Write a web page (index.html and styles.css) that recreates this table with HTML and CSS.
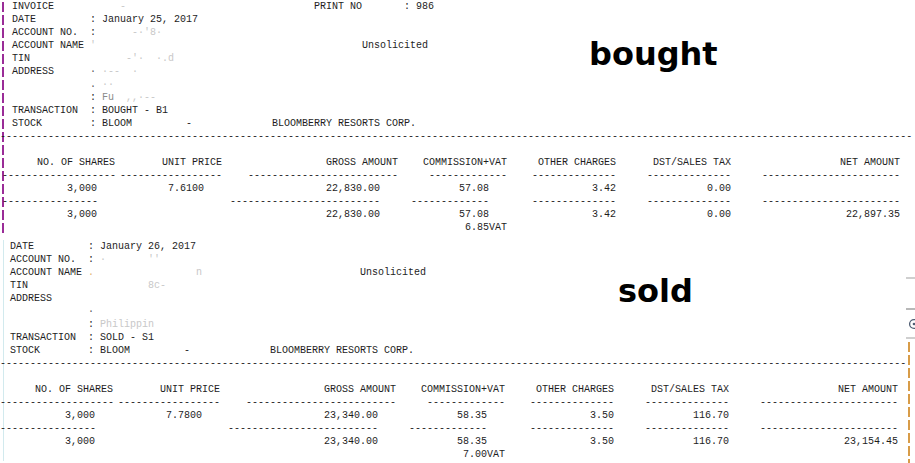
FILE: index.html
```html
<!DOCTYPE html>
<html lang="en">
<head>
<meta charset="utf-8">
<title>Trade confirmations</title>
<link rel="stylesheet" href="styles.css">
</head>
<body>
<main class="page">
  <section class="sheet sheet--buy">
    <div class="meta">
<div class="ln">  INVOICE           <span class="f">-</span>                               <span class="sh">PRINT NO       : 986</span></div>
<div class="ln">  DATE         : January 25, 2017</div>
<div class="ln">  ACCOUNT NO.  :      <span class="f">-·'8·</span></div>
<div class="ln">  ACCOUNT NAME <span class="f">'</span>                                            <span class="sh">Unsolicited</span></div>
<div class="ln">  TIN                <span class="f">-'·  ·.d</span></div>
<div class="ln">  ADDRESS      <span class="d">·</span> <span class="f">·--  ·</span></div>
<div class="ln">               <span class="d">.</span> <span class="f">··</span></div>
<div class="ln">               : <span class="g">Fu</span>  <span class="f">,,·--</span></div>
<div class="ln">  TRANSACTION  : BOUGHT - B1</div>
<div class="ln">  STOCK        : BLOOM         -             <span class="sh">BLOOMBERRY RESORTS CORP.</span></div>
    </div>
<div class="rule">--------------------------------------------------------------------------------------------------------------------------------------------------------</div>
    <div class="table">
      <div class="row"></div>
      <div class="row"><span>NO. OF SHARES</span><span>UNIT PRICE</span><span>GROSS AMOUNT</span><span>COMMISSION+VAT</span><span>OTHER CHARGES</span><span>DST/SALES TAX</span><span>NET AMOUNT</span></div>
      <div class="row"><span>-------------------</span><span>-----------------</span><span>-------------------------</span><span>-------------</span><span>--------------</span><span>--------------</span><span>-----------------------</span></div>
      <div class="row"><span class="p">3,000</span><span class="p">7.6100</span><span class="p">22,830.00</span><span class="p">57.08</span><span>3.42</span><span>0.00</span><span></span></div>
      <div class="row"><span class="p">----------------</span><span></span><span class="p">-------------------------</span><span class="p">-------------</span><span>--------------</span><span>--------------</span><span>-----------------------</span></div>
      <div class="row"><span class="p">3,000</span><span></span><span class="p">22,830.00</span><span class="p">57.08</span><span>3.42</span><span>0.00</span><span>22,897.35</span></div>
      <div class="row"><span></span><span></span><span></span><span>6.85VAT</span><span></span><span></span><span></span></div>
    </div>
  </section>

  <section class="sheet sheet--sell">
    <div class="meta">
<div class="ln"> DATE         : January 26, 2017</div>
<div class="ln"> ACCOUNT NO.  : <span class="f">·</span>       <span class="f">''</span></div>
<div class="ln"> ACCOUNT NAME <span class="o">.</span>                 <span class="f">n</span>                          <span class="sh">Unsolicited</span></div>
<div class="ln"> TIN                    <span class="f">8c-</span></div>
<div class="ln"> ADDRESS</div>
<div class="ln">              <span class="d">·</span></div>
<div class="ln">              : <span class="f">Philippin</span></div>
<div class="ln"> TRANSACTION  : SOLD - S1</div>
<div class="ln"> STOCK        : BLOOM         -             <span class="sh">BLOOMBERRY RESORTS CORP.</span></div>
    </div>
<div class="rule rule--short">-------------------------------------------------------------------------------------------------------------------------------------------------------</div>
    <div class="table">
      <div class="row"></div>
      <div class="row"><span>NO. OF SHARES</span><span>UNIT PRICE</span><span>GROSS AMOUNT</span><span>COMMISSION+VAT</span><span>OTHER CHARGES</span><span>DST/SALES TAX</span><span>NET AMOUNT</span></div>
      <div class="row"><span>-------------------</span><span>-----------------</span><span>-------------------------</span><span>-------------</span><span>--------------</span><span>--------------</span><span>-----------------------</span></div>
      <div class="row"><span class="p">3,000</span><span class="p">7.7800</span><span class="p">23,340.00</span><span class="p">58.35</span><span>3.50</span><span>116.70</span><span></span></div>
      <div class="row"><span class="p">----------------</span><span></span><span class="p">-------------------------</span><span class="p">-------------</span><span>--------------</span><span>--------------</span><span>-----------------------</span></div>
      <div class="row"><span class="p">3,000</span><span></span><span class="p">23,340.00</span><span class="p">58.35</span><span>3.50</span><span>116.70</span><span>23,154.45</span></div>
      <div class="row"><span></span><span></span><span></span><span>7.00VAT</span><span></span><span></span><span></span></div>
    </div>
  </section>

  <p class="tag tag--buy">bought</p>
  <p class="tag tag--sell">sold</p>

  <div class="edge" aria-hidden="true">
    <div class="edge__line"></div>
    <div class="edge__gap"></div>
    <div class="edge__line edge__line--dark"></div>
    <div class="edge__tab">
      <svg width="12" height="12" viewBox="0 0 12 12"><circle cx="6" cy="6" r="4.4" fill="none" stroke="#4f5d73" stroke-width="1.3"/><circle cx="6" cy="6" r="1.3" fill="#4f5d73"/></svg>
    </div>
    <div class="edge__line"></div>
    <div class="edge__track"></div>
  </div>
</main>
</body>
</html>
```

FILE: styles.css
```css
* { box-sizing: border-box; }

html, body {
  margin: 0;
  padding: 0;
  background: #ffffff;
}

body {
  width: 915px;
  height: 463px;
  overflow: hidden;
  font-family: "Liberation Mono", "DejaVu Sans Mono", monospace;
  font-size: 10px;
  line-height: 13px;
  color: #1d1d1d;
}

.page {
  position: relative;
  width: 915px;
  height: 463px;
  overflow: hidden;
}

.sheet {
  background-repeat: no-repeat;
}

.sheet--buy {
  height: 234px;
  background-image: repeating-linear-gradient(to bottom, #9a2c97 0 10px, transparent 10px 13px);
  background-size: 2px 100%;
  background-position: 2px 2px;
}

.sheet--buy .table {
  padding-left: 2px;
}

.sheet--sell {
  margin-top: 6px;
  background-image: linear-gradient(#d2eaee, #d2eaee);
  background-size: 1px 100%;
  background-position: 3px 0;
}

.sheet--sell .meta {
  padding-left: 4px;
}

.ln {
  height: 13px;
  white-space: pre;
}

.rule {
  height: 13px;
  white-space: pre;
  overflow: hidden;
}

.row {
  display: grid;
  grid-template-columns: 113px 107px 176px 109px 109px 115px 169px;
  height: 13px;
  white-space: pre;
}

.row > span {
  text-align: right;
}

.row > .p {
  padding-right: 18px;
}

.f { color: #c8c8c8; }
.g { color: #8a8a8a; }
.d { color: #555555; }
.o { color: #e2b272; }

.sh {
  margin-left: 2px;
}

.tag {
  position: absolute;
  margin: 0;
  font-family: "DejaVu Sans", Verdana, sans-serif;
  font-weight: bold;
  font-size: 32px;
  line-height: 32px;
  color: #000000;
}

.tag--buy {
  left: 589px;
  top: 38px;
}

.tag--sell {
  left: 618px;
  top: 275px;
}

.edge {
  position: absolute;
  left: 906px;
  top: 277px;
  right: 0;
  bottom: 0;
  display: flex;
  flex-direction: column;
}

.edge__line {
  flex: none;
  height: 2px;
  background: #cfcfcf;
}

.edge__line--dark {
  background: #b8b8b8;
}

.edge__gap {
  flex: none;
  height: 29px;
}

.edge__tab {
  flex: none;
  height: 27px;
  display: flex;
  align-items: center;
  padding-left: 2px;
}

.edge__tab svg {
  display: block;
  flex: none;
}

.edge__track {
  flex: 1;
  width: 2px;
  margin: 3px 0 0 2px;
  background-image: repeating-linear-gradient(to bottom, #d89c48 0 10px, transparent 10px 13px);
}
```
